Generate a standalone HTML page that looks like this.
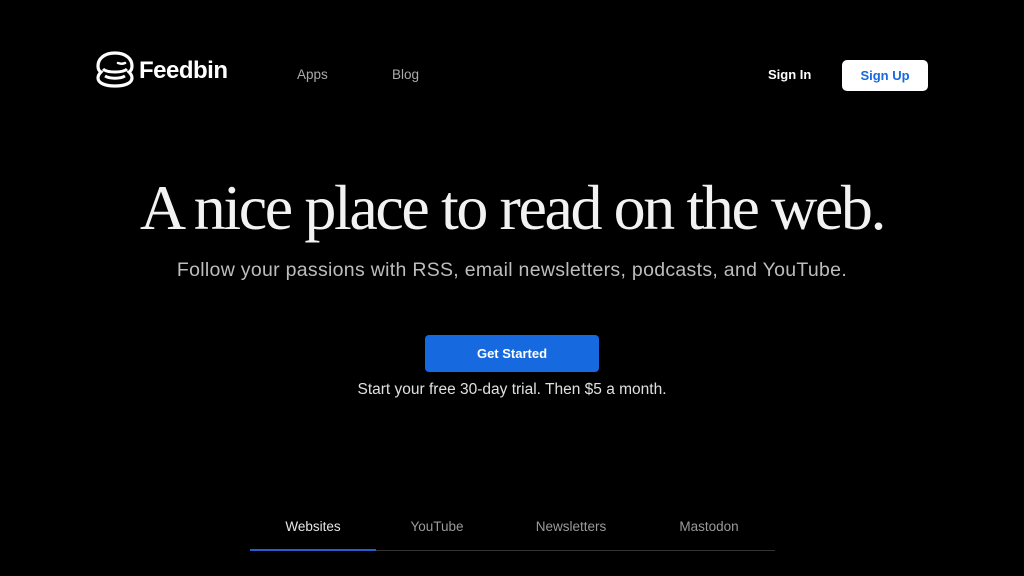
<!DOCTYPE html>
<html><head><meta charset="utf-8"><style>
body{margin:0;width:1024px;height:576px;background:#000;overflow:hidden;font-family:"Liberation Sans",sans-serif;position:relative;color:#fff}
.a{position:absolute}
.nav{font-size:13.5px;color:#aaa;top:67px}
h1{position:absolute;top:171px;left:0;width:1024px;text-align:center;margin:0;font:400 64px "Liberation Serif",serif;letter-spacing:-2.4px;color:#f2f2f2}
.sub{top:259px;width:1024px;text-align:center;font-size:19.5px;color:#bdbdbd;letter-spacing:0.3px}
.btn{left:425px;top:335px;width:174px;height:37px;background:#1769e0;border-radius:4px;text-align:center;line-height:37px;font-size:13px;font-weight:bold}
.trial{top:381px;width:1024px;text-align:center;font-size:15.5px;color:#e0e0e0}
.tab{top:519px;font-size:13.5px;color:#9a9a9a;width:140px;text-align:center}
</style></head><body>
<svg class="a" style="left:95px;top:51px" width="40" height="37" viewBox="0 0 40 37">
<path d="M20 2C9 2 3 8 3 15c0 3 1 5 3 6-2 2-3 4-3 6 0 5 7 8 17 8s17-3 17-8c0-2-1-4-3-6 2-1 3-3 3-6 0-7-6-13-17-13z" fill="none" stroke="#fff" stroke-width="3.2"/>
<path d="M8 18c4 4 20 4 24 0M10 25c5 3 15 3 20 0" fill="none" stroke="#fff" stroke-width="3"/>
<path d="M23 12c3 1 5 1 7 0" fill="none" stroke="#fff" stroke-width="2.5" stroke-linecap="round"/>
</svg>
<div class="a" style="left:139px;top:57px;font-size:24px;font-weight:bold;letter-spacing:-0.5px">Feedbin</div>
<div class="a nav" style="left:297px">Apps</div>
<div class="a nav" style="left:392px">Blog</div>
<div class="a" style="left:768px;top:67px;font-size:13px;font-weight:bold">Sign In</div>
<div class="a" style="left:842px;top:60px;width:86px;height:31px;background:#fff;border-radius:5px;color:#1769e0;font-size:13px;font-weight:bold;text-align:center;line-height:31px">Sign Up</div>
<h1>A nice place to read on the web.</h1>
<div class="a sub">Follow your passions with RSS, email newsletters, podcasts, and YouTube.</div>
<div class="a btn">Get Started</div>
<div class="a trial">Start your free 30-day trial. Then $5 a month.</div>
<div class="a tab" style="left:243px;color:#e6e6e6">Websites</div>
<div class="a tab" style="left:367px">YouTube</div>
<div class="a tab" style="left:501px">Newsletters</div>
<div class="a tab" style="left:639px">Mastodon</div>
<div class="a" style="left:250px;top:550px;width:525px;height:1px;background:#333"></div>
<div class="a" style="left:250px;top:549px;width:126px;height:2px;background:#2a5bd0"></div>
</body></html>
